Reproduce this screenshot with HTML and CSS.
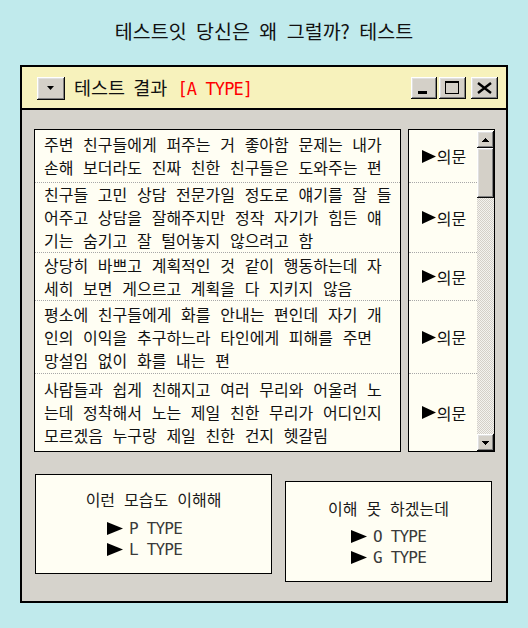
FILE: index.html
```html
<!DOCTYPE html>
<html lang="ko">
<head>
<meta charset="utf-8">
<title>테스트 결과</title>
<link rel="stylesheet" href="styles.css">
</head>
<body>
<div class="heading">테스트잇 당신은 왜 그럴까? 테스트</div>
<div class="window">
  <div class="titlebar">
    <div class="btn btn-menu">
      <svg width="8" height="4" viewBox="0 0 8 4"><path d="M0 0H7L3.5 4Z" fill="#000"/></svg>
    </div>
    <div class="title">테스트 결과 <span class="tag">[A TYPE]</span></div>
    <div class="controls">
      <div class="btn btn-min">
        <svg width="26" height="22" viewBox="0 0 26 22" shape-rendering="crispEdges"><rect x="7" y="14" width="9" height="3" fill="#000"/></svg>
      </div>
      <div class="btn btn-max">
        <svg width="27" height="22" viewBox="0 0 27 22" shape-rendering="crispEdges"><path d="M6 4H20V17H6Z M7 6V16H19V6Z" fill="#000" fill-rule="evenodd"/></svg>
      </div>
      <div class="btn btn-close">
        <svg width="27" height="22" viewBox="0 0 27 22"><path d="M7 6L20 16M20 6L7 16" stroke="#000" stroke-width="2.4"/></svg>
      </div>
    </div>
  </div>
  <div class="content">
    <div class="main">
      <div class="list rows">
        <div class="row">주변 친구들에게 퍼주는 거 좋아함 문제는 내가<br>손해 보더라도 진짜 친한 친구들은 도와주는 편</div>
        <div class="row">친구들 고민 상담 전문가일 정도로 얘기를 잘 들<br>어주고 상담을 잘해주지만 정작 자기가 힘든 얘<br>기는 숨기고 잘 털어놓지 않으려고 함</div>
        <div class="row">상당히 바쁘고 계획적인 것 같이 행동하는데 자<br>세히 보면 게으르고 계획을 다 지키지 않음</div>
        <div class="row">평소에 친구들에게 화를 안내는 편인데 자기 개<br>인의 이익을 추구하느라 타인에게 피해를 주면<br>망설임 없이 화를 내는 편</div>
        <div class="row">사람들과 쉽게 친해지고 여러 무리와 어울려 노<br>는데 정착해서 노는 제일 친한 무리가 어디인지<br>모르겠음 누구랑 제일 친한 건지 헷갈림</div>
      </div>
      <div class="side">
        <div class="rows side-rows">
          <div class="row q"><svg class="tri" width="14" height="13" viewBox="0 0 14 13"><path d="M0 0L14 6.5L0 13Z" fill="#000"/></svg>의문</div>
          <div class="row q"><svg class="tri" width="14" height="13" viewBox="0 0 14 13"><path d="M0 0L14 6.5L0 13Z" fill="#000"/></svg>의문</div>
          <div class="row q"><svg class="tri" width="14" height="13" viewBox="0 0 14 13"><path d="M0 0L14 6.5L0 13Z" fill="#000"/></svg>의문</div>
          <div class="row q"><svg class="tri" width="14" height="13" viewBox="0 0 14 13"><path d="M0 0L14 6.5L0 13Z" fill="#000"/></svg>의문</div>
          <div class="row q"><svg class="tri" width="14" height="13" viewBox="0 0 14 13"><path d="M0 0L14 6.5L0 13Z" fill="#000"/></svg>의문</div>
        </div>
        <div class="scrollbar">
          <div class="btn sb-btn">
            <svg width="7" height="4" viewBox="0 0 7 4" shape-rendering="crispEdges"><path d="M3 0H4V1H5V2H6V3H7V4H0V3H1V2H2V1H3Z" fill="#000"/></svg>
          </div>
          <div class="btn sb-thumb"></div>
          <div class="sb-track"></div>
          <div class="btn sb-btn">
            <svg width="7" height="4" viewBox="0 0 7 4" shape-rendering="crispEdges"><path d="M0 0H7V1H6V2H5V3H4V4H3V3H2V2H1V1H0Z" fill="#000"/></svg>
          </div>
        </div>
      </div>
    </div>
    <div class="bottom">
      <div class="box box-left">
        <div class="box-title">이런 모습도 이해해</div>
        <div class="types">
          <div class="type"><svg class="tri2" width="16" height="13" viewBox="0 0 16 13"><path d="M0 0L16 6.5L0 13Z" fill="#000"/></svg>P TYPE</div>
          <div class="type"><svg class="tri2" width="16" height="13" viewBox="0 0 16 13"><path d="M0 0L16 6.5L0 13Z" fill="#000"/></svg>L TYPE</div>
        </div>
      </div>
      <div class="box box-right">
        <div class="box-title">이해 못 하겠는데</div>
        <div class="types">
          <div class="type"><svg class="tri2" width="16" height="13" viewBox="0 0 16 13"><path d="M0 0L16 6.5L0 13Z" fill="#000"/></svg>O TYPE</div>
          <div class="type"><svg class="tri2" width="16" height="13" viewBox="0 0 16 13"><path d="M0 0L16 6.5L0 13Z" fill="#000"/></svg>G TYPE</div>
        </div>
      </div>
    </div>
  </div>
</div>
</body>
</html>
```

FILE: styles.css
```css
* { box-sizing: border-box; }

html, body {
  margin: 0;
  padding: 0;
}

body {
  width: 528px;
  height: 628px;
  background: #c0eaec;
  font-family: "Noto Sans CJK KR", "Noto Sans", sans-serif;
  color: #111;
  overflow: hidden;
}

.heading {
  padding-top: 19px;
  height: 65px;
  line-height: 24px;
  font-size: 19.5px;
  word-spacing: 4px;
  text-align: center;
  color: #111;
}

.window {
  margin-left: 20px;
  width: 488px;
  height: 538px;
  border: 2px solid #000;
  background: #d6d3cc;
}

.titlebar {
  display: flex;
  align-items: center;
  height: 43px;
  padding: 1px 8px 0 15px;
  background: #f7f2bc;
  border-bottom: 2px solid #000;
}

.btn {
  display: flex;
  align-items: center;
  justify-content: center;
  background: #d4d0c8;
  box-shadow: inset -1px -1px #0a0a0a, inset 1px 1px #ffffff, inset -2px -2px #808080, inset 2px 2px #dfdfdf;
}

.btn-menu {
  width: 28px;
  height: 23px;
}

.title {
  margin-left: 9px;
  font-size: 18.5px;
  line-height: 24px;
  word-spacing: 3px;
  color: #111;
}

.tag {
  margin-left: 2px;
  font-family: "DejaVu Sans Mono", monospace;
  font-size: 17px;
  letter-spacing: -0.9px;
  word-spacing: 0;
  color: #ff0000;
}

.controls {
  margin-left: auto;
  display: flex;
}

.btn-min { width: 26px; height: 22px; }
.btn-max { width: 27px; height: 22px; margin-left: 2px; }
.btn-close { width: 27px; height: 22px; margin-left: 5px; }

.content {
  padding: 19px 11px 0 12px;
}

.main {
  display: flex;
  gap: 7px;
  height: 323px;
}

.rows {
  display: grid;
  grid-template-rows: 53px 70px 48px 73px 1fr;
}

.row {
  display: flex;
  flex-direction: column;
  justify-content: center;
  border-bottom: 1px dotted #a8a8a8;
  overflow: hidden;
}

.row:last-child {
  border-bottom: none;
}

.list {
  width: 367px;
  border: 1px solid #000;
  background: #fffef3;
}

.list .row {
  padding-left: 9px;
  font-size: 16px;
  line-height: 23px;
  word-spacing: 5.2px;
  white-space: nowrap;
}

.side {
  flex: 1;
  display: flex;
  border: 1px solid #000;
  background: #fffef3;
}

.side-rows {
  flex: 1;
}

.q {
  flex-direction: row;
  align-items: center;
  justify-content: center;
  padding-left: 2px;
  font-size: 16px;
  line-height: 20px;
}

.tri {
  margin-right: 1px;
}

.scrollbar {
  width: 17px;
  display: flex;
  flex-direction: column;
  padding-top: 1px;
}

.sb-btn {
  width: 17px;
  height: 17px;
}

.sb-thumb {
  width: 17px;
  height: 50px;
}

.sb-track {
  flex: 1;
  background: repeating-conic-gradient(#d4d0c8 0 25%, #f4f3ef 0 50%) 0 0 / 2px 2px;
}

.bottom {
  display: flex;
  align-items: flex-start;
  margin-top: 22px;
}

.box {
  border: 1px solid #000;
  background: #fffef3;
  text-align: center;
  font-size: 16px;
}

.box-left {
  margin-left: 1px;
  width: 237px;
  height: 100px;
  padding-top: 13px;
}

.box-right {
  margin-left: 13px;
  margin-top: 7px;
  width: 207px;
  height: 101px;
  padding-top: 15px;
}

.box-title {
  line-height: 22px;
  word-spacing: 4.5px;
  color: #1a1a1a;
}

.types {
  display: inline-flex;
  flex-direction: column;
  align-items: flex-start;
  margin-top: 8px;
}

.box-left .types {
  margin-right: 18px;
}

.box-right .types {
  margin-top: 7px;
}

.type {
  display: flex;
  align-items: center;
  height: 21px;
  font-family: "DejaVu Sans Mono", monospace;
  font-size: 16px;
  letter-spacing: -0.8px;
  color: #3a3a3a;
}

.tri2 {
  margin-right: 6px;
}
```
